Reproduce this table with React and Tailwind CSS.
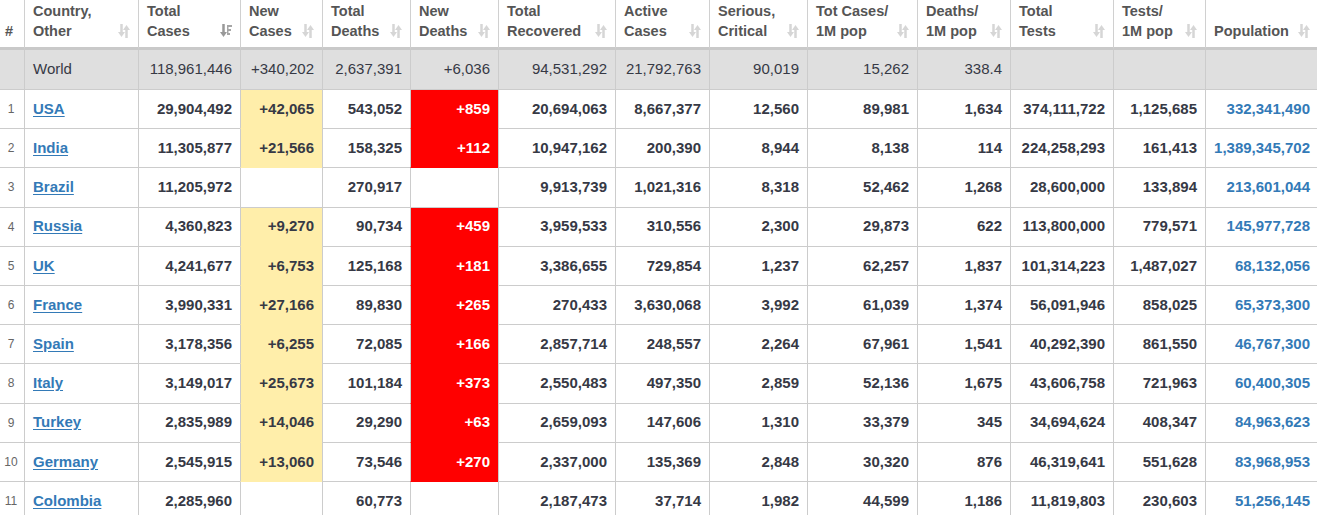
const font = { fontFamily: '"Liberation Sans", Arial, Helvetica, sans-serif' };

const headers = [
  ["Country,", "Other"],
  ["Total", "Cases"],
  ["New", "Cases"],
  ["Total", "Deaths"],
  ["New", "Deaths"],
  ["Total", "Recovered"],
  ["Active", "Cases"],
  ["Serious,", "Critical"],
  ["Tot Cases/", "1M pop"],
  ["Deaths/", "1M pop"],
  ["Total", "Tests"],
  ["Tests/", "1M pop"],
  ["", "Population"],
];

const world = [
  "118,961,446", "+340,202", "2,637,391", "+6,036", "94,531,292", "21,792,763",
  "90,019", "15,262", "338.4", "", "", "",
];

const rows = [
  ["USA", "29,904,492", "+42,065", "543,052", "+859", "20,694,063", "8,667,377", "12,560", "89,981", "1,634", "374,111,722", "1,125,685", "332,341,490"],
  ["India", "11,305,877", "+21,566", "158,325", "+112", "10,947,162", "200,390", "8,944", "8,138", "114", "224,258,293", "161,413", "1,389,345,702"],
  ["Brazil", "11,205,972", "", "270,917", "", "9,913,739", "1,021,316", "8,318", "52,462", "1,268", "28,600,000", "133,894", "213,601,044"],
  ["Russia", "4,360,823", "+9,270", "90,734", "+459", "3,959,533", "310,556", "2,300", "29,873", "622", "113,800,000", "779,571", "145,977,728"],
  ["UK", "4,241,677", "+6,753", "125,168", "+181", "3,386,655", "729,854", "1,237", "62,257", "1,837", "101,314,223", "1,487,027", "68,132,056"],
  ["France", "3,990,331", "+27,166", "89,830", "+265", "270,433", "3,630,068", "3,992", "61,039", "1,374", "56,091,946", "858,025", "65,373,300"],
  ["Spain", "3,178,356", "+6,255", "72,085", "+166", "2,857,714", "248,557", "2,264", "67,961", "1,541", "40,292,390", "861,550", "46,767,300"],
  ["Italy", "3,149,017", "+25,673", "101,184", "+373", "2,550,483", "497,350", "2,859", "52,136", "1,675", "43,606,758", "721,963", "60,400,305"],
  ["Turkey", "2,835,989", "+14,046", "29,290", "+63", "2,659,093", "147,606", "1,310", "33,379", "345", "34,694,624", "408,347", "84,963,623"],
  ["Germany", "2,545,915", "+13,060", "73,546", "+270", "2,337,000", "135,369", "2,848", "30,320", "876", "46,319,641", "551,628", "83,968,953"],
  ["Colombia", "2,285,960", "", "60,773", "", "2,187,473", "37,714", "1,982", "44,599", "1,186", "11,819,803", "230,603", "51,256,145"],
];

const grid =
  "grid grid-cols-[24px_114px_102px_82px_88px_88px_117px_94px_98px_110px_93px_103px_92px_113px]";

const SortIcon = ({ active }) => (
  <svg width="12" height="14" viewBox="0 0 12 14" className="shrink-0 mb-[3px]">
    <g fill={active ? "#999999" : "#d6d6d6"}>
      <rect x="2.25" y="0" width="2.5" height="9" />
      <polygon points="0,8 7,8 3.5,13" />
    </g>
    {active ? (
      <g fill="#a6a6a6">
        <rect x="7" y="1" width="5" height="2" />
        <rect x="7" y="5" width="4" height="2" />
        <rect x="7" y="9" width="3" height="2" />
        <rect x="7" y="1" width="1.5" height="10" />
      </g>
    ) : (
      <g fill="#d6d6d6">
        <polygon points="5,6 12,6 8.5,1" />
        <rect x="7.25" y="5" width="2.5" height="9" />
      </g>
    )}
  </svg>
);

const Header = () => (
  <div className={grid}>
    <div className="h-[50px] flex items-end pl-[5px] pb-[6px] border-b-[3px] border-[#c9c9c9] text-[14.5px] font-bold leading-5 text-[#555]">
      #
    </div>
    {headers.map((h, i) => (
      <div
        key={i}
        className="h-[50px] flex items-end justify-between pl-2 pr-2 pb-[6px] border-l border-l-[#d0d0d0] border-b-[3px] border-b-[#c9c9c9] text-[14.5px] font-bold leading-5 text-[#555]"
      >
        <div className="flex flex-col">
          <span>{h[0]}</span>
          <span>{h[1]}</span>
        </div>
        <SortIcon active={i === 1} />
      </div>
    ))}
  </div>
);

const WorldRow = () => (
  <div className={`${grid} bg-[#dfdfdf] text-[15px] text-[#363945]`}>
    <div className="h-[40px] border-b border-[#cccccc]" />
    <div className="h-[40px] flex items-center pl-2 border-l border-b border-[#cccccc]">World</div>
    {world.map((v, i) => (
      <div
        key={i}
        className="h-[40px] flex items-center justify-end pr-2 border-l border-b border-[#cccccc]"
      >
        {v}
      </div>
    ))}
  </div>
);

const cellTone = (i, v) => {
  if (i === 1 && v) return "bg-[#ffeeaa] border-b-[#ffeeaa]";
  if (i === 3 && v) return "bg-[#ff0000] border-b-[#ff0000] text-white";
  return "";
};

const CountryRow = ({ n, row }) => {
  const [name, ...vals] = row;
  return (
    <div className={`${grid} bg-white text-[15px] font-bold text-[#363945]`}>
      <div className="h-[39.2px] flex items-center justify-center pr-[2px] border-b border-[#cccccc] text-[12px] font-normal text-[#666]">
        {n}
      </div>
      <div className="h-[39.2px] flex items-center pl-2 border-l border-b border-[#cccccc]">
        <a href="#" className="text-[#337ab7] underline underline-offset-2">
          {name}
        </a>
      </div>
      {vals.map((v, i) => (
        <div
          key={i}
          className={`h-[39.2px] flex items-center justify-end pr-2 border-l border-b border-[#cccccc] ${cellTone(i, v)} ${
            i === 11 ? "text-[#337ab7]" : ""
          }`}
        >
          {v}
        </div>
      ))}
    </div>
  );
};

export default function App() {
  return (
    <div className="w-[1317px] h-[515px] overflow-hidden bg-white" style={font}>
      <div className="w-[1318px]">
        <Header />
        <WorldRow />
        {rows.map((r, i) => (
          <CountryRow key={r[0]} n={i + 1} row={r} />
        ))}
      </div>
    </div>
  );
}
